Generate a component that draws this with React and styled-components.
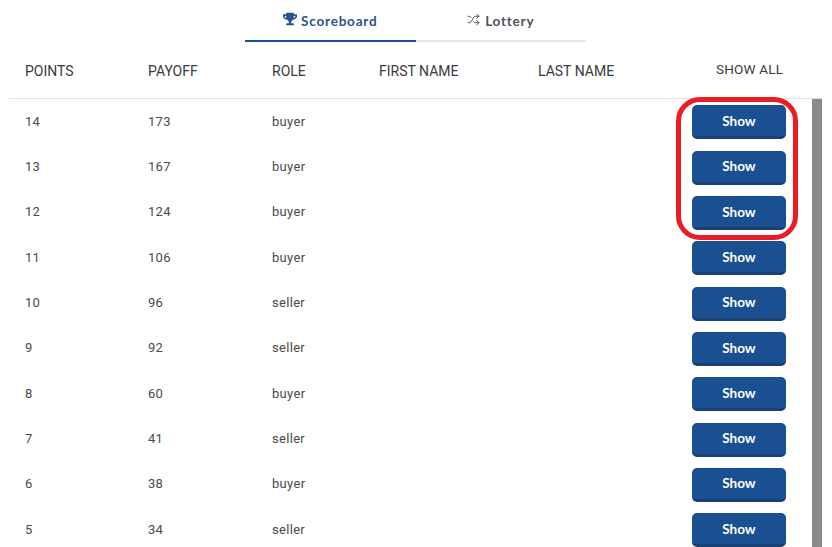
import React from "react";
import styled, { createGlobalStyle } from "styled-components";
import { FaTrophy } from "react-icons/fa";
import { Shuffle } from "lucide-react";

const GlobalStyle = createGlobalStyle`
  html, body {
    margin: 0;
    padding: 0;
    height: 547px;
    overflow: hidden;
    background: #fff;
  }
`;

const Page = styled.div`
  position: relative;
  width: 832px;
  height: 547px;
  overflow: hidden;
  font-family: "Roboto", sans-serif;
  color: #333;
`;

const Tabs = styled.div`
  display: flex;
  width: 341px;
  height: 42px;
  margin-left: 245px;
`;

const Tab = styled.div`
  flex: 1;
  display: flex;
  justify-content: center;
  align-items: center;
  gap: 4px;
  padding-top: 1px;
  box-sizing: border-box;
  border-bottom: 2px solid ${(p) => (p.$active ? "#1a4f91" : "#e6e6e6")};
  color: ${(p) => (p.$active ? "#2b5290" : "#55505f")};
  font-family: "Lato", sans-serif;
  font-size: 13.5px;
  font-weight: 700;
  letter-spacing: 0.8px;
  svg {
    margin-top: -3px;
    margin-right: ${(p) => (p.$active ? "0" : "1px")};
  }
`;

const Table = styled.div`
  width: 813px;
  margin-left: 9px;
`;

const HeadRow = styled.div`
  display: grid;
  grid-template-columns: 123px 124px 107px 159px 1fr 130px;
  align-items: center;
  height: 57px;
  padding: 1px 10px 0 0;
  box-sizing: border-box;
  border-bottom: 1px solid #e3e3e3;
  font-size: 14px;
  color: #3a3a3a;
`;

const HeadCell = styled.div`
  padding-left: 16px;
`;

const ShowAll = styled.div`
  font-size: 13.5px;
  letter-spacing: 0.2px;
  margin-top: -3px;
  padding-left: 34px;
`;

const BodyWrap = styled.div`
  display: flex;
`;

const Rows = styled.div`
  flex: 1;
`;

const Row = styled.div`
  display: grid;
  grid-template-columns: 123px 124px 107px 159px 1fr 130px;
  align-items: center;
  height: 45.33px;
  font-size: 13px;
  letter-spacing: 0.3px;
  color: #4a4a4a;
`;

const Cell = styled.div`
  padding-left: 16px;
  margin-top: -1px;
`;

const ShowButton = styled.button`
  width: 94px;
  height: 34px;
  margin-left: 10px;
  margin-top: 1.4px;
  padding: 0;
  border: 0;
  border-bottom: 3px solid #1a4176;
  border-radius: 5px;
  background: #1a4f91;
  color: #fff;
  font-family: "Lato", sans-serif;
  font-size: 13.5px;
  font-weight: 700;
`;

const ScrollThumb = styled.div`
  width: 10px;
  background: #8a8a8a;
`;

const Highlight = styled.div`
  position: absolute;
  left: 676px;
  top: 97px;
  width: 122px;
  height: 143px;
  box-sizing: border-box;
  border: 5px solid #ed1c24;
  border-radius: 24px;
  pointer-events: none;
`;

const rows = [
  [14, 173, "buyer"],
  [13, 167, "buyer"],
  [12, 124, "buyer"],
  [11, 106, "buyer"],
  [10, 96, "seller"],
  [9, 92, "seller"],
  [8, 60, "buyer"],
  [7, 41, "seller"],
  [6, 38, "buyer"],
  [5, 34, "seller"],
];

export default function App() {
  return (
    <Page>
      <GlobalStyle />
      <Tabs>
        <Tab $active>
          <FaTrophy size={14} /> Scoreboard
        </Tab>
        <Tab>
          <Shuffle size={13} strokeWidth={1.8} /> Lottery
        </Tab>
      </Tabs>
      <Table>
        <HeadRow>
          <HeadCell>POINTS</HeadCell>
          <HeadCell>PAYOFF</HeadCell>
          <HeadCell>ROLE</HeadCell>
          <HeadCell>FIRST NAME</HeadCell>
          <HeadCell>LAST NAME</HeadCell>
          <ShowAll>SHOW ALL</ShowAll>
        </HeadRow>
        <BodyWrap>
          <Rows>
            {rows.map(([points, payoff, role]) => (
              <Row key={points}>
                <Cell>{points}</Cell>
                <Cell>{payoff}</Cell>
                <Cell>{role}</Cell>
                <Cell />
                <Cell />
                <ShowButton>Show</ShowButton>
              </Row>
            ))}
          </Rows>
          <ScrollThumb />
        </BodyWrap>
      </Table>
      <Highlight />
    </Page>
  );
}
